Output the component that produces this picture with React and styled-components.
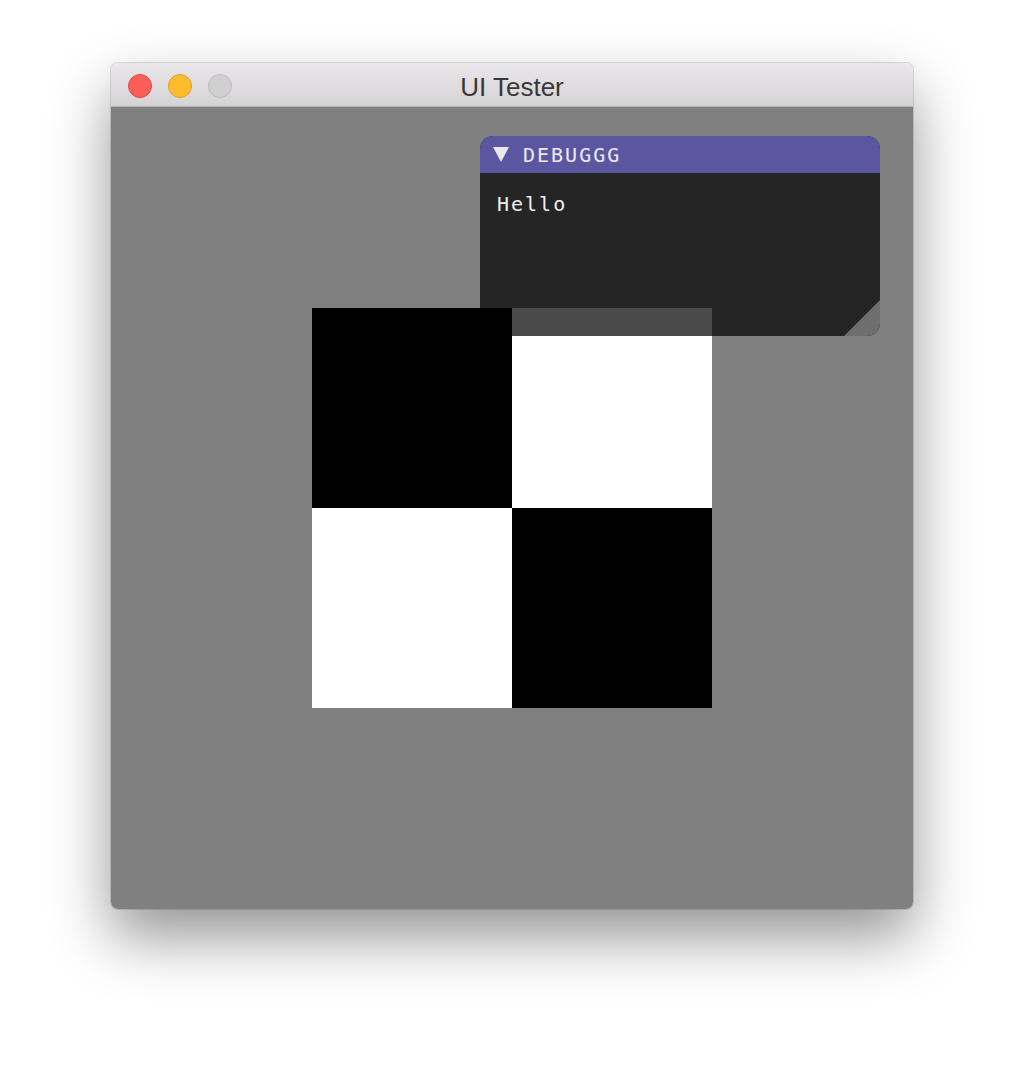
import React from "react";
import styled, { createGlobalStyle } from "styled-components";

const Global = createGlobalStyle`
  html, body { margin: 0; padding: 0; background: #ffffff; }
  body { width: 1024px; height: 1068px; overflow: hidden; }
`;

const Page = styled.div`
  width: 1024px;
  height: 1068px;
  display: flex;
  justify-content: center;
  padding-top: 63px;
  box-sizing: border-box;
`;

const MacWindow = styled.div`
  width: 802px;
  height: 846px;
  border-radius: 7px;
  overflow: hidden;
  display: flex;
  flex-direction: column;
  box-shadow: 0 28px 60px rgba(0, 0, 0, 0.42), 0 0 0 1px rgba(0, 0, 0, 0.12);
`;

const TitleBar = styled.div`
  height: 44px;
  flex: none;
  box-sizing: border-box;
  background: linear-gradient(#e9e7e9, #d5d3d5);
  border-bottom: 1px solid #b4b2b4;
  display: flex;
  align-items: center;
  position: relative;
  padding-left: 17px;
  padding-top: 2px;
  gap: 16px;
`;

const Light = styled.div`
  width: 24px;
  height: 24px;
  border-radius: 50%;
  box-sizing: border-box;
  background: ${(p) => p.$bg};
  border: 1px solid ${(p) => p.$bd};
`;

const Title = styled.div`
  position: absolute;
  left: 0;
  right: 0;
  top: 0;
  bottom: 0;
  display: flex;
  align-items: center;
  justify-content: center;
  font-family: "Liberation Sans", Arial, sans-serif;
  font-size: 26px;
  color: #383838;
  padding-top: 5px;
  pointer-events: none;
`;

const Content = styled.div`
  flex: 1;
  background: #808080;
  position: relative;
  display: flex;
  align-items: center;
  justify-content: center;
`;

const Checker = styled.div`
  width: 400px;
  height: 400px;
  display: grid;
  grid-template-columns: 200px 200px;
  grid-template-rows: 200px 200px;
`;

const Cell = styled.div`
  background: ${(p) => (p.$dark ? "#000000" : "#ffffff")};
`;

const DebugWin = styled.div`
  position: absolute;
  left: 369px;
  top: 29px;
  width: 400px;
  height: 200px;
  border-radius: 13px;
  overflow: hidden;
  display: flex;
  flex-direction: column;
  background: rgba(0, 0, 0, 0.71);
`;

const DebugTitle = styled.div`
  height: 37px;
  flex: none;
  background: #5b56a0;
  display: flex;
  align-items: center;
  padding-left: 13px;
  gap: 14px;
  font-family: "DejaVu Sans Mono", monospace;
  font-size: 20px;
  letter-spacing: 2px;
  color: #ececf4;
`;

const DebugBody = styled.div`
  flex: 1;
  position: relative;
  padding: 19px 17px;
  font-family: "DejaVu Sans Mono", monospace;
  font-size: 20px;
  letter-spacing: 2px;
  color: #f0f0f0;
`;

const Grip = styled.svg`
  position: absolute;
  right: 0;
  bottom: 0;
  width: 36px;
  height: 36px;
`;

export default function App() {
  return (
    <>
      <Global />
      <Page>
        <MacWindow>
          <TitleBar>
            <Light $bg="#fc5f57" $bd="#e0463f" />
            <Light $bg="#fdbc2e" $bd="#de9f22" />
            <Light $bg="#d1d0d1" $bd="#bcbbbc" />
            <Title>UI Tester</Title>
          </TitleBar>
          <Content>
            <Checker>
              <Cell $dark />
              <Cell />
              <Cell />
              <Cell $dark />
            </Checker>
            <DebugWin>
              <DebugTitle>
                <svg width="16" height="15" viewBox="0 0 16 15">
                  <polygon points="0,0 16,0 8,15" fill="#e8e8ee" />
                </svg>
                <span>DEBUGGG</span>
              </DebugTitle>
              <DebugBody>
                Hello
                <Grip viewBox="0 0 36 36">
                  <polygon points="36,0 36,36 0,36" fill="#6e6e6e" />
                </Grip>
              </DebugBody>
            </DebugWin>
          </Content>
        </MacWindow>
      </Page>
    </>
  );
}
